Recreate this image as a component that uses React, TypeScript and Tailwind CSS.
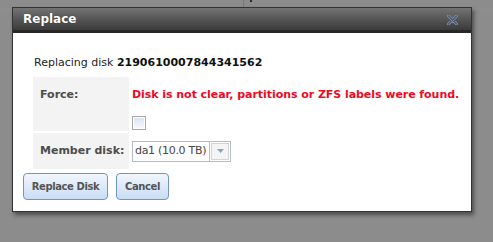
export default function App() {
  return (
    <div className="relative w-[493px] h-[242px] overflow-hidden bg-[#8c8c8c] pt-[7px] pl-[12px] font-['DejaVu_Sans',Verdana,sans-serif]">
      {/* page behind the overlay */}
      <div className="absolute left-0 top-[9px] h-px w-full bg-[#978d86]" />
      <div className="absolute left-[243px] top-0 h-[8px] w-px bg-[#777]" />
      <div className="absolute left-[250px] top-0 h-[2px] w-[2px] bg-[#2a2a2a]" />

      {/* dialog */}
      <div className="relative w-[460px] border border-[#333] bg-white shadow-[2px_3px_4px_rgba(0,0,0,0.45)]">
        <div className="flex h-[25px] items-center justify-between border-b-[3px] border-[#272727] bg-gradient-to-b from-[#737373] to-[#3b3b3b] pl-[10px] pr-[13px]">
          <span className="text-[12px] font-bold leading-none text-white [text-shadow:0_0_1px_rgba(0,0,0,0.6)]">Replace</span>
          <svg width="11" height="10" viewBox="0 0 11 10" className="mt-[1px]">
            <path d="M1.5 1 L9.5 9 M9.5 1 L1.5 9" stroke="#7f91aa" strokeWidth="3" strokeLinecap="round" />
            <path d="M1.5 1 L9.5 9 M9.5 1 L1.5 9" stroke="#4a5a73" strokeWidth="1.4" strokeLinecap="round" />
          </svg>
        </div>

        <div className="pt-[23px] pb-[11px] pl-[10px]">
          <div className="pl-[11px] text-[11px] leading-[14px] text-[#222]">
            Replacing disk <span className="font-bold text-[#111]">2190610007844341562</span>
          </div>

          <div className="mt-[7px] ml-[10px] grid grid-cols-[96px_auto] grid-rows-[54px_36px] gap-[2px] text-[11px] leading-[14px]">
            <div className="bg-[#f3f3f3] pl-[7px] pt-[11px] font-bold text-[#4d4d4d]">Force:</div>
            <div className="pt-[11px] pl-px">
              <div className="whitespace-nowrap font-bold tracking-[-0.05px] text-[#ee0a1f]">Disk is not clear, partitions or ZFS labels were found.</div>
              <div className="mt-[14px] h-[14px] w-[14px] border border-[#a7a7a7] bg-white p-px">
                <div className="h-full w-full bg-gradient-to-b from-[#dae5f3] to-[#f5f8fd]" />
              </div>
            </div>

            <div className="flex items-center bg-[#f3f3f3] pl-[7px] font-bold text-[#4d4d4d]">Member disk:</div>
            <div className="flex items-center pl-px">
              <div className="flex h-[21px] w-[99px] border border-[#b3bccb]">
                <div className="flex flex-1 items-center overflow-hidden whitespace-nowrap pl-[2px] tracking-[-0.3px] text-[#454545]">da1 (10.0 TB)</div>
                <div className="flex w-[21px] shrink-0 items-center justify-center border-l border-[#b3bccb] p-px">
                  <div className="flex h-full w-full items-center justify-center border border-[#d4d4d4] bg-[#f4f4f4]">
                    <svg width="7" height="4" viewBox="0 0 7 4">
                      <path d="M0 0 L7 0 L3.5 4 Z" fill="#8fa3c1" />
                    </svg>
                  </div>
                </div>
              </div>
            </div>
          </div>

          <div className="mt-[4px] flex gap-[8px]">
            <button className="h-[27px] w-[85px] rounded-[4px] border border-[#7095c4] bg-gradient-to-b from-[#f1f6fd] to-[#c9ddf5] text-[10px] font-bold tracking-[-0.4px] text-[#555]">
              Replace Disk
            </button>
            <button className="h-[27px] w-[53px] rounded-[4px] border border-[#7095c4] bg-gradient-to-b from-[#f1f6fd] to-[#c9ddf5] text-[10px] font-bold tracking-[-0.4px] text-[#555]">
              Cancel
            </button>
          </div>
        </div>
      </div>
    </div>
  )
}
